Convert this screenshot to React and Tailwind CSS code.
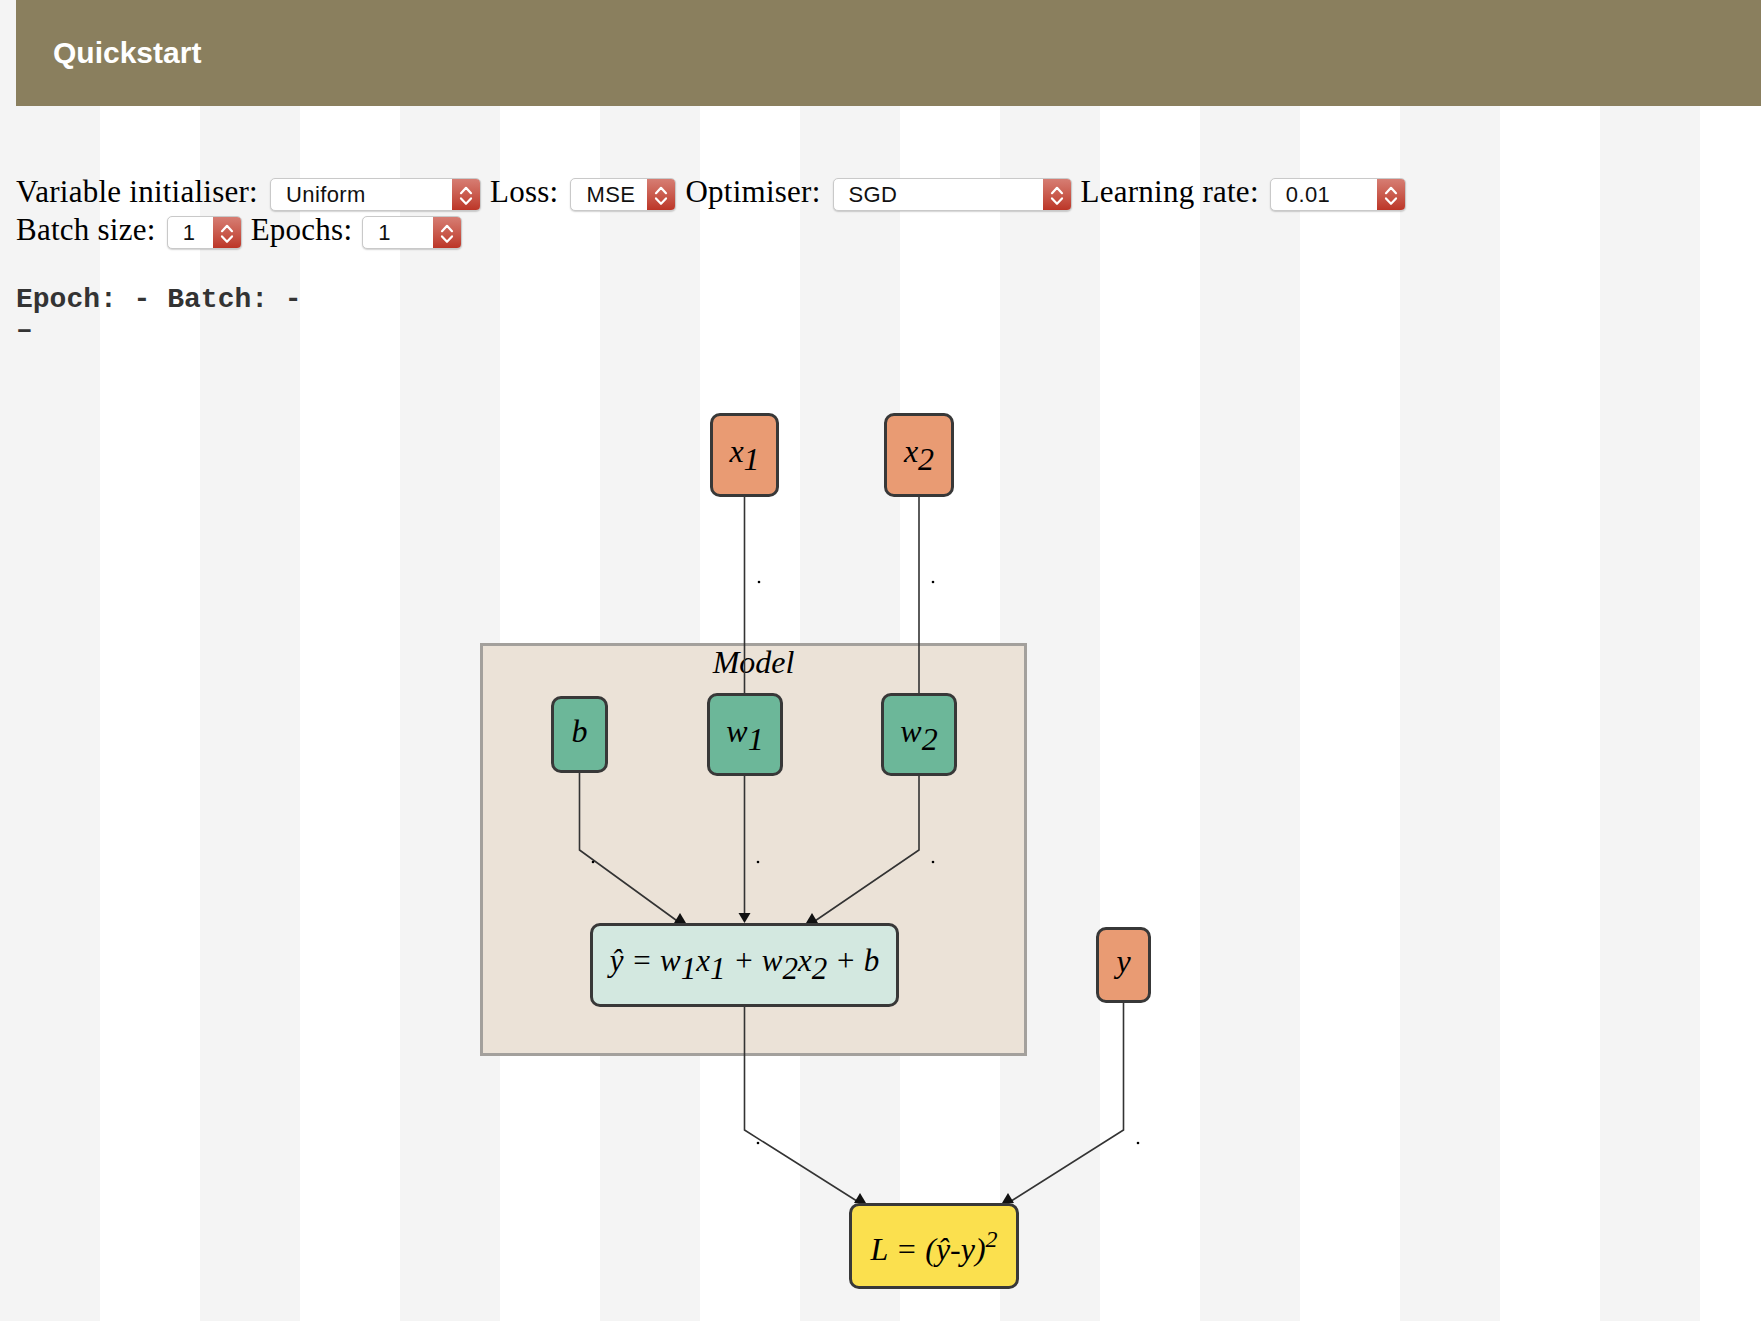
import clsx from 'clsx';

const serif = "font-['Liberation_Serif','Times_New_Roman',serif]";

function Chevrons() {
  return (
    <svg width="28" height="31" viewBox="0 0 28 31" fill="none" stroke="#fff" strokeWidth="2.2" strokeLinecap="round" strokeLinejoin="round">
      <path d="M9 14.2L14 8.8L19 14.2"/>
      <path d="M9 19.4L14 24.8L19 19.4"/>
    </svg>);
}

function Select({ value, className }) {
  return (<div className={clsx('flex h-[33px] shrink-0 overflow-hidden rounded-[5px] border border-[#c9c9c9] bg-white shadow-[0_1px_1.5px_rgba(0,0,0,0.18)]', className)}>
      <div className="flex flex-1 items-center pl-[15px] font-['Liberation_Sans',Arial,sans-serif] text-[22px] tracking-[0.4px] text-[#111]">
        {value}
      </div>
      <div className="w-[28px] bg-linear-to-b from-[#d67d73] to-[#bc3527]">
        <Chevrons/>
      </div>
    </div>);
}

function Label({ children, className }) {
  return (<span className={clsx('mb-[5px] whitespace-nowrap text-[31px] leading-[34px] tracking-[0.25px] text-black', serif, className)}>
      {children}
    </span>);
}

function Sub({ children }) {
  return <span className="align-[-8px] leading-[0]">{children}</span>;
}

function Node({ className, children }) {
  return (<div className={clsx('absolute flex items-center justify-center rounded-[10px] border-[3px] border-[#383838] italic text-black', serif, className)}>
      {children}
    </div>);
}

function Tri({ x, y, up }) {
  // y = box top (base for ▲, tip for ▼)
  const pts = up
    ? `${x - 6},${y} ${x + 6},${y} ${x},${y - 10}`
    : `${x - 6},${y - 10} ${x + 6},${y - 10} ${x},${y}`;
  return <polygon points={pts} fill="#111"/>;
}

function Edges() {
  const dots = [
    [759, 236], [933, 236],
    [593, 516], [758, 516], [933, 516],
    [758, 797], [1138, 797],
  ];
  return (<svg className="pointer-events-none absolute inset-0" width="1761" height="975">
      <g fill="none" stroke="#333" strokeWidth="1.6">
        <path d="M744.5 151V347"/>
        <path d="M919 151V347"/>
        <path d="M579.5 427V504L680 577"/>
        <path d="M744.5 430V570"/>
        <path d="M919 430V504L812 577"/>
        <path d="M744.5 661V784L860 857"/>
        <path d="M1123.5 657V784L1008 857"/>
      </g>
      <Tri x={680} y={577} up/>
      <Tri x={744.5} y={577}/>
      <Tri x={812} y={577} up/>
      <Tri x={860} y={857} up/>
      <Tri x={1008} y={857} up/>
      {dots.map(([x, y]) => (<circle key={`${x}-${y}`} cx={x} cy={y} r="1.3" fill="#000"/>))}
    </svg>);
}

export default function App() {
  return (<div className="min-h-screen w-full bg-[image:repeating-linear-gradient(90deg,#f4f4f4_0_100px,#ffffff_100px_200px)]">
      {/* Header */}
      <div className="ml-4 flex h-[106px] items-center bg-[#8a7f5e] pl-[37px]">
        <h1 className="font-['Liberation_Sans',Arial,sans-serif] text-[30px] font-bold leading-none text-white">
          Quickstart
        </h1>
      </div>

      {/* Controls */}
      <div className="mt-[69px] pl-4">
        <div className="flex h-[38px] items-center">
          <Label>Variable initialiser:</Label>
          <Select value="Uniform" className="ml-[12px] w-[211px]"/>
          <Label className="ml-[9px]">Loss:</Label>
          <Select value="MSE" className="ml-[12px] w-[106px]"/>
          <Label className="ml-[9px]">Optimiser:</Label>
          <Select value="SGD" className="ml-[12px] w-[239px]"/>
          <Label className="ml-[9px]">Learning rate:</Label>
          <Select value="0.01" className="ml-[11px] w-[136px]"/>
        </div>
        <div className="flex h-[38px] items-center">
          <Label>Batch size:</Label>
          <Select value="1" className="ml-[11px] w-[75px]"/>
          <Label className="ml-[9px]">Epochs:</Label>
          <Select value="1" className="ml-[10px] w-[100px]"/>
        </div>
      </div>

      {/* Progress */}
      <div className="mt-[33px] pl-4 font-['Liberation_Mono','Courier_New',monospace] text-[28px] font-bold leading-[31px] text-[#333]">
        <div className="whitespace-pre">Epoch: - Batch: -</div>
        <div>–</div>
      </div>

      {/* Graph */}
      <div className="relative h-[975px] w-full">
        <div className={clsx('absolute left-[480px] top-[297px] h-[413px] w-[547px] border-[3px] border-[#a3a09c] bg-[#ebe2d7] text-center text-[32px] italic leading-[32px] text-black', serif)}>
          Model
        </div>

        <Edges/>

        <Node className="left-[710px] top-[67px] h-[84px] w-[69px] bg-[#e99b73] pb-[8px] text-[32px] leading-[32px]">
          <span>x<Sub>1</Sub></span>
        </Node>
        <Node className="left-[884px] top-[67px] h-[84px] w-[70px] bg-[#e99b73] pb-[8px] text-[32px] leading-[32px]">
          <span>x<Sub>2</Sub></span>
        </Node>

        <Node className="left-[551px] top-[350px] h-[77px] w-[57px] bg-[#6cb799] pb-[8px] text-[32px] leading-[32px]">
          <span>b</span>
        </Node>
        <Node className="left-[707px] top-[347px] h-[83px] w-[76px] bg-[#6cb799] pb-[8px] text-[32px] leading-[32px]">
          <span>w<Sub>1</Sub></span>
        </Node>
        <Node className="left-[881px] top-[347px] h-[83px] w-[76px] bg-[#6cb799] pb-[8px] text-[32px] leading-[32px]">
          <span>w<Sub>2</Sub></span>
        </Node>

        <Node className="left-[590px] top-[577px] h-[84px] w-[309px] whitespace-pre bg-[#d3e8e0] pb-[8px] text-[31px] leading-[32px]">
          <span>ŷ = w<Sub>1</Sub>x<Sub>1</Sub> + w<Sub>2</Sub>x<Sub>2</Sub> + b</span>
        </Node>

        <Node className="left-[1096px] top-[581px] h-[76px] w-[55px] bg-[#e99b73] pb-[8px] text-[32px] leading-[32px]">
          <span>y</span>
        </Node>

        <Node className="left-[849px] top-[857px] h-[86px] w-[170px] whitespace-pre bg-[#fbe04e] pt-[6px] text-[32px] leading-[32px]">
          <span>L = (ŷ-y)<span className="align-[13px] text-[24px] leading-[0]">2</span></span>
        </Node>
      </div>
    </div>);
}
